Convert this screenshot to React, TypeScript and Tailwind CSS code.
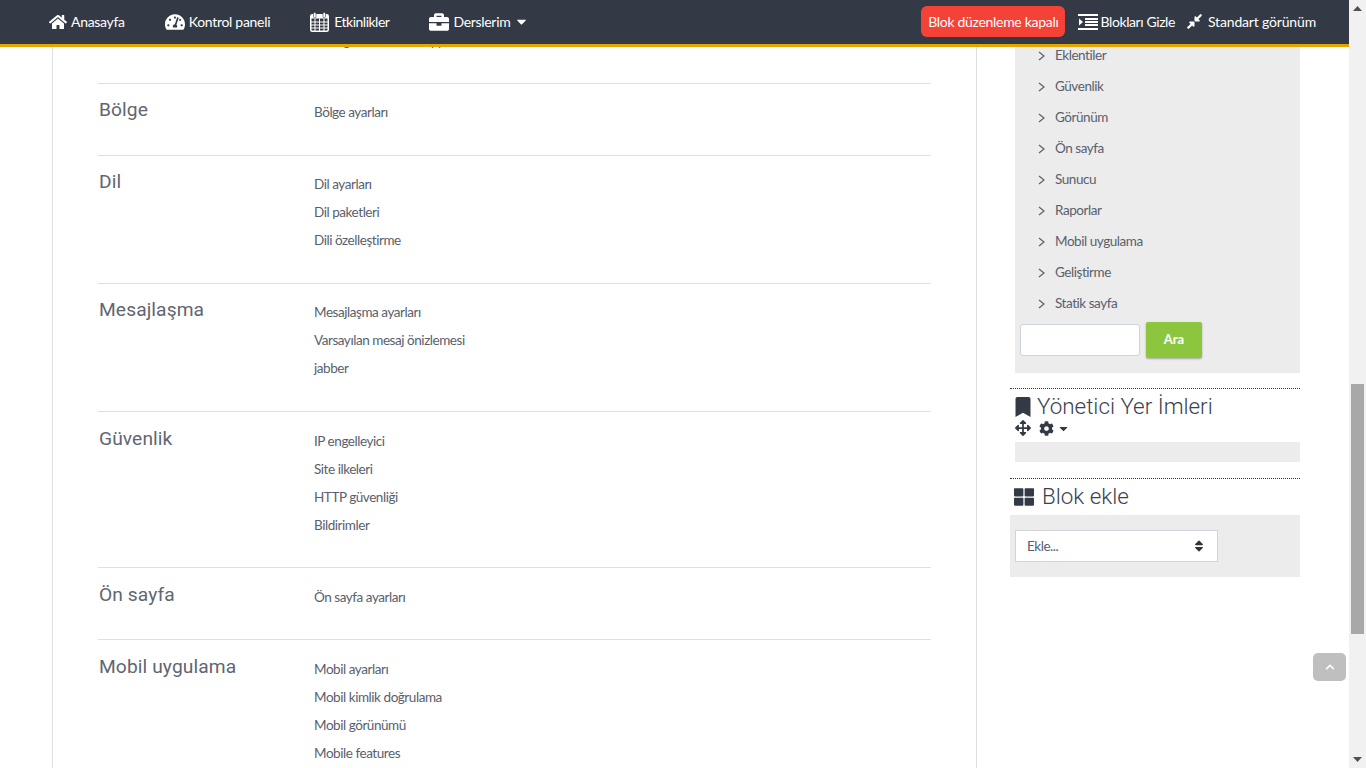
import { FaHome, FaTachometerAlt, FaBriefcase, FaCaretDown, FaCompressAlt, FaBookmark, FaArrowsAlt, FaCog, FaThLarge, FaSort, FaChevronUp } from "react-icons/fa";

const sections = [
  { title: "Bölge", links: ["Bölge ayarları"], tight: true },
  { title: "Dil", links: ["Dil ayarları", "Dil paketleri", "Dili özelleştirme"], tight: true },
  { title: "Mesajlaşma", links: ["Mesajlaşma ayarları", "Varsayılan mesaj önizlemesi", "jabber"], tight: true },
  { title: "Güvenlik", links: ["IP engelleyici", "Site ilkeleri", "HTTP güvenliği", "Bildirimler"] },
  { title: "Ön sayfa", links: ["Ön sayfa ayarları"] },
  { title: "Mobil uygulama", links: ["Mobil ayarları", "Mobil kimlik doğrulama", "Mobil görünümü", "Mobile features"] },
];

const treeItems = ["Eklentiler", "Güvenlik", "Görünüm", "Ön sayfa", "Sunucu", "Raporlar", "Mobil uygulama", "Geliştirme", "Statik sayfa"];

const CalendarIcon = () => (
  <svg width="19" height="20" viewBox="0 0 19 20" fill="none" className="shrink-0">
    <rect x="0.75" y="2.75" width="17.5" height="16.5" rx="1.5" stroke="white" strokeWidth="1.5" />
    <rect x="1" y="3" width="17" height="3.5" fill="white" />
    <path d="M1 10h17M1 13h17M1 16h17M5 6.5v12.5M9.5 6.5v12.5M14 6.5v12.5" stroke="white" strokeWidth="1" />
    <rect x="3.5" y="0.5" width="2.5" height="5" rx="1" fill="white" stroke="#343a45" strokeWidth="0.6" />
    <rect x="13" y="0.5" width="2.5" height="5" rx="1" fill="white" stroke="#343a45" strokeWidth="0.6" />
  </svg>
);

const OutdentIcon = () => (
  <svg width="20" height="16" viewBox="0 0 20 16" fill="white" className="shrink-0">
    <rect x="0" y="0" width="20" height="2" />
    <rect x="0" y="14" width="20" height="2" />
    <rect x="7" y="4" width="13" height="2" />
    <rect x="7" y="7" width="13" height="2" />
    <rect x="7" y="10" width="13" height="2" />
    <path d="M1 4.5v7L5 8z" />
  </svg>
);

const AngleIcon = () => (
  <svg width="7" height="10" viewBox="0 0 7 10" fill="none" stroke="#59606d" strokeWidth="1.2" className="mr-[10px] shrink-0">
    <path d="M1 1l5 4-5 4" />
  </svg>
);

const Row = ({ title, links, tight }: { title: string; links: string[]; tight?: boolean }) => (
  <div className={tight ? "flex border-t border-[#dfdfdf] pt-[14px] pb-[29px]" : "flex border-t border-[#dfdfdf] pt-[15px] pb-7"}>
    <h3 className="w-[216px] shrink-0 pt-[1px] pl-[1px] font-['Roboto',sans-serif] text-[19.2px] leading-[22px] tracking-[0.1px] text-[#5f6671]">{title}</h3>
    <ul>
      {links.map((l) => (
        <li key={l} className="h-7 text-[13.5px] leading-7 tracking-[-0.45px] text-[#59606d]">{l}</li>
      ))}
    </ul>
  </div>
);

export default function App() {
  return (
    <div className="flex h-screen overflow-hidden bg-white font-['Lato',sans-serif]">
      <div className="relative flex min-w-0 flex-1 flex-col">
        <nav className="relative z-10 flex h-[47px] shrink-0 items-center border-b-[3px] border-[#e5a602] bg-[#343a45] pb-[1px] pl-[49px] pr-[33px] text-[14px] tracking-[-0.3px] text-white">
          <div className="flex items-center gap-[40px]">
            <a className="flex items-center gap-[4px]"><FaHome className="text-[18px]" />Anasayfa</a>
            <a className="flex items-center gap-[4px]"><FaTachometerAlt className="text-[20px]" />Kontrol paneli</a>
            <a className="flex items-center gap-[5px] tracking-[-0.5px]"><CalendarIcon />Etkinlikler</a>
            <a className="flex items-center gap-[4px]"><FaBriefcase className="text-[20px]" />Derslerim<FaCaretDown className="text-[15px]" /></a>
          </div>
          <div className="ml-auto flex items-center">
            <button className="mr-[13px] h-[31px] rounded-[6px] bg-[#f44336] px-[7px] text-[14px] tracking-[-0.3px] text-white">Blok düzenleme kapalı</button>
            <a className="mr-[11px] flex items-center gap-[2px] tracking-[-0.4px]"><OutdentIcon />Blokları Gizle</a>
            <a className="flex items-center gap-[5px] tracking-[-0.17px]"><FaCompressAlt className="text-[17px]" />Standart görünüm</a>
          </div>
        </nav>

        <div className="flex min-h-0 flex-1">
          <main className="ml-[52px] w-[925px] shrink-0 border-x border-[#dfdfdf] px-[45px]">
            <div className="-mt-[20px] h-[56px]">
              <div className="flex">
                <div className="w-[216px] shrink-0" />
                <p className="h-7 text-[13.5px] leading-7 tracking-[-0.45px] text-[#59606d]">Ders güncelleme dil apps</p>
              </div>
            </div>
            {sections.map((s) => (
              <Row key={s.title} title={s.title} links={s.links} tight={s.tight} />
            ))}
          </main>

          <aside className="ml-[33px] w-[290px] shrink-0">
            <div className="-mt-[7px] ml-[5px] bg-[#ececec] pb-[15px]">
              <ul>
                {treeItems.map((t) => (
                  <li key={t} className="flex h-[31px] items-center pl-[23px] text-[13.5px] tracking-[-0.45px] text-[#59606d]">
                    <AngleIcon />
                    {t}
                  </li>
                ))}
              </ul>
              <div className="mt-[3px] flex items-center pl-[5px]">
                <input className="h-[32px] w-[120px] rounded-[3px] border border-[#cfd3da] bg-white" />
                <button className="ml-[6px] h-[36px] w-[56px] rounded-[2px] bg-[#8cc63f] text-[13px] font-bold text-white shadow-[0_1px_2px_rgba(0,0,0,0.3)]">Ara</button>
              </div>
            </div>

            <section className="mt-[15px] border-t border-dotted border-[#333] pb-[16px]">
              <h2 className="flex h-[32px] items-center pt-[3px] pl-[3px] font-['Roboto',sans-serif] text-[22.4px] font-light text-[#3a4250]">
                <FaBookmark className="mr-[4px] text-[20px] text-[#343a45]" />
                Yönetici Yer İmleri
              </h2>
              <div className="flex h-[14px] items-center pl-[5px] text-[#343a45]">
                <FaArrowsAlt className="text-[16px]" />
                <FaCog className="ml-[8px] text-[15px]" />
                <FaCaretDown className="ml-[3px] text-[13px]" />
              </div>
              <div className="mt-[7px] ml-[5px] h-[20px] bg-[#ececec]" />
            </section>

            <section className="border-t border-dotted border-[#333]">
              <h2 className="flex h-[36px] items-center pb-[1px] pl-[4px] font-['Roboto',sans-serif] text-[22.4px] font-light text-[#3a4250]">
                <FaThLarge className="mr-[8px] text-[20px] text-[#343a45]" />
                Blok ekle
              </h2>
              <div className="bg-[#ececec] px-[5px] py-[15px]">
                <div className="flex h-[32px] w-[203px] items-center justify-between border border-[#d1d5db] bg-white pl-[11px] pr-[11px] text-[13.5px] tracking-[-0.45px] text-[#59606d]">
                  Ekle...
                  <FaSort className="text-[14px] text-[#333]" />
                </div>
              </div>
            </section>
          </aside>
        </div>

        <button className="absolute right-[3px] top-[653px] flex h-[28px] w-[33px] items-center justify-center rounded-[5px] bg-[#bfbfbf] text-white">
          <FaChevronUp className="text-[10px]" />
        </button>
      </div>

      <div className="relative w-[17px] shrink-0 bg-[#f1f1f1]">
        <svg width="9" height="5" viewBox="0 0 9 5" className="absolute left-[4px] top-[6px]"><path d="M0 5L4.5 0 9 5z" fill="#505050" /></svg>
        <div className="absolute left-[2px] top-[384px] h-[250px] w-[13px] bg-[#a8a8a8]" />
        <svg width="9" height="5" viewBox="0 0 9 5" className="absolute bottom-[6px] left-[4px]"><path d="M0 0L4.5 5 9 0z" fill="#505050" /></svg>
      </div>
    </div>
  );
}
